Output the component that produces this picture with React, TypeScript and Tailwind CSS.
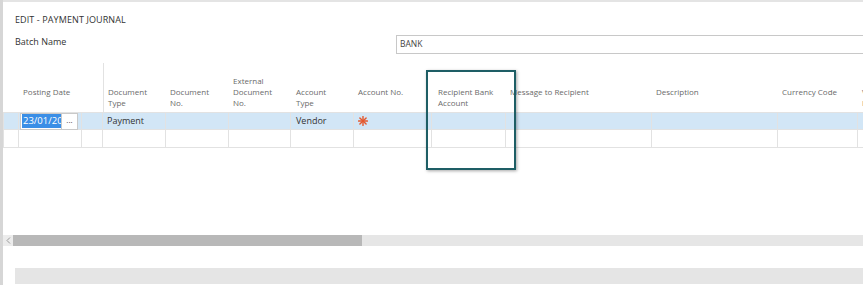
import React from "react";

const COLS = [16, 63, 21, 63, 63, 62, 63, 78, 74, 146, 126, 80, 40];

const HEADERS: { label: string[]; width: number; pl: string; border?: boolean }[] = [
    { label: [], width: 16, pl: "pl-1" },
    { label: ["Posting Date"], width: 84, pl: "pl-1" },
    { label: ["Document", "Type"], width: 63, pl: "pl-1", border: true },
    { label: ["Document", "No."], width: 63, pl: "pl-1" },
    { label: ["External", "Document", "No."], width: 62, pl: "pl-1" },
    { label: ["Account", "Type"], width: 63, pl: "pl-[5px]" },
    { label: ["Account No."], width: 78, pl: "pl-1" },
    { label: ["Recipient Bank", "Account"], width: 74, pl: "pl-1.5" },
    { label: ["Message to Recipient"], width: 146, pl: "pl-1" },
    { label: ["Description"], width: 126, pl: "pl-1" },
    { label: ["Currency Code"], width: 80, pl: "pl-1" },
    { label: ["V", "I"], width: 40, pl: "pl-1" },
];

function Asterisk() {
    return (
        <svg width="10" height="10" viewBox="0 0 10 10" className="ml-[4px]">
            <g stroke="#e4582e" strokeWidth="1.4" strokeLinecap="round">
                <line x1="5" y1="0.6" x2="5" y2="9.4" />
                <line x1="0.6" y1="5" x2="9.4" y2="5" />
                <line x1="1.9" y1="1.9" x2="8.1" y2="8.1" />
                <line x1="8.1" y1="1.9" x2="1.9" y2="8.1" />
            </g>
        </svg>
    );
}

function Row({ first }: { first?: boolean }) {
    return (
        <div
            className={`flex h-[18px] border-b border-[#e2e2e2] ${first ? "bg-[#d2e6f6] border-t" : "bg-white"}`}
        >
            {COLS.map((w, i) => (
                <div
                    key={i}
                    style={{ width: w }}
                    className={`shrink-0 h-full flex items-center border-r border-[#e2e2e2] ${i === 0 ? "border-l" : ""}`}
                >
                    {first && i === 1 && (
                        <div className="flex h-[17px] ml-[1px] w-[58px] bg-white border border-[#c9c9c9]">
                            <div className="w-[40px] overflow-hidden flex items-center pl-[1px]">
                                <span className="bg-[#3a8ee6] text-white text-[9.5px] leading-[14px] whitespace-nowrap px-[1px]">
                                    23/01/20
                                </span>
                            </div>
                            <div className="flex-1 border-l border-[#c9c9c9] flex items-center justify-center text-[8px] text-[#444] leading-none pb-[3px]">
                                ...
                            </div>
                        </div>
                    )}
                    {first && i === 3 && <span className="pl-1 text-[9px] text-[#333]">Payment</span>}
                    {first && i === 6 && <span className="pl-[5px] text-[9px] text-[#333]">Vendor</span>}
                    {first && i === 7 && <Asterisk />}
                </div>
            ))}
        </div>
    );
}

export default function App() {
    return (
        <div
            className="w-[863px] h-[285px] relative overflow-hidden bg-white flex"
            style={{ fontFamily: "'Open Sans', 'Noto Sans', sans-serif" }}
        >
            {/* backdrop edge */}
            <div className="w-[3px] shrink-0 bg-[#d6d6d6]" />

            <div className="flex-1 flex flex-col min-w-0">
                <div className="h-[2px] bg-[#e4e4e4] shrink-0" />

                {/* Title */}
                <div className="mt-[12px] h-[12px] pl-[12px] text-[9px] leading-[12px] text-[#333] tracking-[0.1px]">
                    EDIT - PAYMENT JOURNAL
                </div>

                {/* Batch */}
                <div className="mt-[9px] h-[19px] flex items-start">
                    <div className="pl-[12px] pt-[1px] w-[393px] text-[9px] leading-[12px] text-[#333]">Batch Name</div>
                    <div className="flex-1 h-[19px] border border-[#c8c8c8] border-r-0 flex items-center pl-[3px] text-[8.5px] text-[#444]">
                        BANK
                    </div>
                </div>

                {/* Header */}
                <div className="mt-[9px] h-[49px] flex">
                    {HEADERS.map((h, i) => (
                        <div
                            key={i}
                            style={{ width: h.width }}
                            className={`shrink-0 flex flex-col justify-end pb-[4px] ${h.pl} ${h.border ? "border-l border-[#e2e2e2]" : ""} text-[8px] leading-[11px] text-[#6a6a6a] whitespace-nowrap overflow-hidden`}
                        >
                            {h.label.map((l) => (
                                <span key={l}>{l}</span>
                            ))}
                            {h.label.length === 1 && <span className="h-[11px]" />}
                        </div>
                    ))}
                </div>

                {/* Rows */}
                <Row first />
                <Row />

                {/* Scrollbar */}
                <div className="mt-[87px] h-[11px] flex shrink-0">
                    <div className="w-[10px] bg-[#ececec] flex items-center justify-center">
                        <svg width="5" height="7" viewBox="0 0 5 7">
                            <path d="M4 0.5 L1 3.5 L4 6.5" stroke="#9a9a9a" strokeWidth="1" fill="none" />
                        </svg>
                    </div>
                    <div className="w-[349px] bg-[#b8b8b8]" />
                    <div className="flex-1 bg-[#e6e6e6]" />
                </div>

                {/* Footer bar */}
                <div className="mt-[22px] ml-[12px] h-[16px] bg-[#e5e5e5] shrink-0" />
            </div>

            {/* Highlight annotation */}
            <div className="absolute left-[426px] top-[70px] w-[90px] h-[100px] border-2 border-[#1e5e65] shadow-[1px_1px_3px_rgba(0,0,0,0.35)]" />
        </div>
    );
}
